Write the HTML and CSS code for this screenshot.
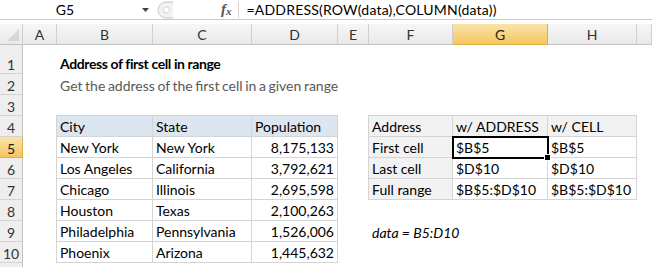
FILE: index.html
```html
<!DOCTYPE html>
<html lang="en">
<head>
    <meta charset="UTF-8">
    <title>Address of first cell in range</title>
    <link rel="stylesheet" href="styles.css">
</head>
<body>
    <div class="formula-bar">
        <div class="name-box">G5</div>
        <svg class="name-arrow" width="7" height="4" viewBox="0 0 7 4"><path d="M0 0h7L3.5 4z" fill="#444"/></svg>
        <svg class="grip" width="16" height="18" viewBox="0 0 16 18">
            <path d="M16 1H9a8 8 0 0 0 0 16h7" fill="#f2f2f2" stroke="#c8c8c8"/>
            <circle cx="9.5" cy="9" r="3" fill="#fff" stroke="#d6d6d6"/>
        </svg>
        <span class="fx">f<sub>x</sub></span>
        <span class="fx-sep"></span>
        <div class="formula">=ADDRESS(ROW(data),COLUMN(data))</div>
    </div>

    <div class="sheet">
        <div class="corner"><span class="corner-mark"></span></div>
        <div class="col-head">A</div>
        <div class="col-head">B</div>
        <div class="col-head">C</div>
        <div class="col-head">D</div>
        <div class="col-head">E</div>
        <div class="col-head">F</div>
        <div class="col-head active">G</div>
        <div class="col-head">H</div>
        <div class="col-head"></div>

        <div class="row-heads">
            <div class="row-head tall">1</div>
            <div class="row-head">2</div>
            <div class="row-head">3</div>
            <div class="row-head">4</div>
            <div class="row-head active">5</div>
            <div class="row-head">6</div>
            <div class="row-head">7</div>
            <div class="row-head">8</div>
            <div class="row-head">9</div>
            <div class="row-head">10</div>
            <div class="row-head stub"></div>
        </div>

        <div class="cell title">Address of first cell in range</div>
        <div class="cell subtitle">Get the address of the first cell in a given range</div>

        <div class="table data-table">
            <div class="td th">City</div>
            <div class="td th">State</div>
            <div class="td th">Population</div>
            <div class="td">New York</div>
            <div class="td">New York</div>
            <div class="td num">8,175,133</div>
            <div class="td">Los Angeles</div>
            <div class="td">California</div>
            <div class="td num">3,792,621</div>
            <div class="td">Chicago</div>
            <div class="td">Illinois</div>
            <div class="td num">2,695,598</div>
            <div class="td">Houston</div>
            <div class="td">Texas</div>
            <div class="td num">2,100,263</div>
            <div class="td">Philadelphia</div>
            <div class="td">Pennsylvania</div>
            <div class="td num">1,526,006</div>
            <div class="td">Phoenix</div>
            <div class="td">Arizona</div>
            <div class="td num">1,445,632</div>
        </div>

        <div class="table result-table">
            <div class="td gray">Address</div>
            <div class="td gray">w/ ADDRESS</div>
            <div class="td gray">w/ CELL</div>
            <div class="td gray">First cell</div>
            <div class="td">$B$5</div>
            <div class="td">$B$5</div>
            <div class="td gray">Last cell</div>
            <div class="td">$D$10</div>
            <div class="td">$D$10</div>
            <div class="td gray">Full range</div>
            <div class="td">$B$5:$D$10</div>
            <div class="td">$B$5:$D$10</div>
        </div>

        <div class="selection"><span class="fill-handle"></span></div>

        <div class="cell note">data = B5:D10</div>
    </div>
</body>
</html>
```

FILE: styles.css
```css
body {
    margin: 0;
    font-family: "Lato", sans-serif;
    font-size: 14px;
    color: #000;
    background-color: #fff;
    overflow: hidden;
}

/* formula bar */
.formula-bar {
    display: flex;
    align-items: center;
    height: 19px;
    border-bottom: 1px solid #c9c9c9;
    margin-bottom: 4px;
}

.name-box {
    width: 130px;
    text-align: center;
}

.name-arrow {
    margin-left: 12px;
}

.grip {
    margin-left: 8px;
}

.fx {
    margin-left: 48px;
    font-family: "Liberation Serif", serif;
    font-style: italic;
    font-weight: bold;
    font-size: 15px;
    color: #555;
}

.fx sub {
    font-size: 11px;
    vertical-align: -1px;
}

.fx-sep {
    margin-left: 6px;
    width: 1px;
    height: 17px;
    background-color: #d4d4d4;
}

.formula {
    margin-left: 8px;
    letter-spacing: 0.2px;
}

/* sheet grid */
.sheet {
    display: grid;
    grid-template-columns: 23px 34px 96px 99px 86px 31px 84px 95px 89px 1fr;
    grid-template-rows: 21px 29px repeat(9, 21px) 4px;
}

.corner, .col-head {
    grid-row: 1;
    background: linear-gradient(#f6f6f6, #e9e9e9);
    border-right: 1px solid #cfcfcf;
    border-bottom: 1px solid #c2c2c2;
    box-sizing: border-box;
}

.corner {
    grid-column: 1;
    position: relative;
}

.corner-mark {
    position: absolute;
    right: 3px;
    bottom: 3px;
    width: 0;
    height: 0;
    border-left: 12px solid transparent;
    border-bottom: 12px solid #d6d6d6;
}

.col-head {
    display: flex;
    align-items: center;
    justify-content: center;
    color: #333;
}

.col-head.active, .row-head.active {
    background: linear-gradient(#fbe3a8, #f4c661);
    border-color: #e2ac47;
    color: #222;
}

.row-heads {
    grid-column: 1;
    grid-row: 2 / -1;
    display: flex;
    flex-direction: column;
}

.row-head {
    flex: 0 0 21px;
    box-sizing: border-box;
    display: flex;
    align-items: flex-end;
    justify-content: center;
    line-height: 17px;
    background-color: #eeeeee;
    border-right: 1px solid #c2c2c2;
    border-bottom: 1px solid #d3d3d3;
    color: #333;
}

.row-head.tall {
    flex-basis: 29px;
}

.row-head.stub {
    flex-basis: 4px;
    border-bottom: none;
}

.cell {
    display: flex;
    align-items: flex-end;
    padding: 0 3px;
    line-height: 18px;
    white-space: nowrap;
}

.title {
    grid-column: 3 / 8;
    grid-row: 2;
    font-weight: bold;
    letter-spacing: -0.4px;
    padding-bottom: 1px;
}

.subtitle {
    grid-column: 3 / 8;
    grid-row: 3;
    color: #595959;
    word-spacing: -1px;
}

.note {
    grid-column: 7 / 10;
    grid-row: 10;
    font-style: italic;
}

/* tables */
.table {
    display: grid;
    grid-auto-rows: 21px;
    margin: -1px 0 0 -1px;
    border-top: 1px solid #d4d4d4;
    border-left: 1px solid #d4d4d4;
}

.data-table {
    grid-column: 3 / 6;
    grid-row: 5 / 12;
    grid-template-columns: 96px 99px 86px;
}

.result-table {
    grid-column: 7 / 10;
    grid-row: 5 / 9;
    grid-template-columns: 84px 95px 89px;
}

.td {
    box-sizing: border-box;
    display: flex;
    align-items: flex-end;
    padding: 0 3px;
    line-height: 18px;
    white-space: nowrap;
    border-right: 1px solid #d4d4d4;
    border-bottom: 1px solid #d4d4d4;
}

.th {
    background-color: #dce6f1;
}

.gray {
    background-color: #f2f2f2;
}

.num {
    justify-content: flex-end;
}

.selection {
    grid-column: 8;
    grid-row: 6;
    margin: -1px;
    border: 2px solid #000;
    position: relative;
}

.fill-handle {
    position: absolute;
    right: -4px;
    bottom: -4px;
    width: 5px;
    height: 5px;
    background-color: #000;
    border: 1px solid #fff;
}
```
